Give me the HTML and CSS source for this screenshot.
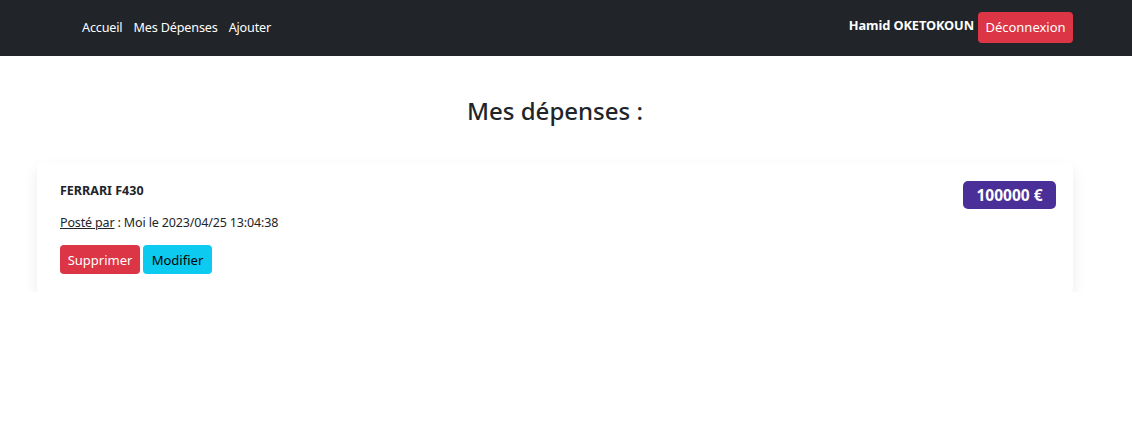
FILE: index.html
```html
<!DOCTYPE html>
<html lang="fr">
<head>
<meta charset="utf-8">
<title>Mes dépenses</title>
<link rel="stylesheet" href="styles.css">
</head>
<body>
<nav class="navbar">
  <ul class="nav-links">
    <li><a href="#">Accueil</a></li>
    <li><a href="#">Mes Dépenses</a></li>
    <li><a href="#">Ajouter</a></li>
  </ul>
  <div class="nav-user">
    <span class="user-name">Hamid OKETOKOUN</span>
    <a class="btn btn-danger btn-logout" href="#">Déconnexion</a>
  </div>
</nav>
<main class="main">
  <h2 class="page-title">Mes dépenses :</h2>
  <div class="card">
    <div class="card-body">
      <h5 class="card-title">FERRARI F430</h5>
      <p class="card-meta"><u>Posté par</u> : Moi le 2023/04/25 13:04:38</p>
      <div class="actions">
        <a class="btn btn-danger" href="#">Supprimer</a>
        <a class="btn btn-info" href="#">Modifier</a>
      </div>
    </div>
    <span class="badge">100000 €</span>
  </div>
</main>
</body>
</html>
```
FILE: styles.css
```css
* { box-sizing: border-box; }
body {
  margin: 0;
  font-family: "Noto Sans", "Open Sans", sans-serif;
  font-size: 13px;
  color: #212529;
  background: #fff;
}
a { text-decoration: none; }
.navbar {
  height: 56px;
  background: #212529;
  display: flex;
  align-items: center;
  justify-content: space-between;
  padding: 0 59px 2px 82px;
}
.nav-links {
  list-style: none;
  margin: 0;
  padding: 0;
  display: flex;
  gap: 11px;
}
.nav-links a {
  color: #fff;
  font-size: 12.6px;
  letter-spacing: -0.15px;
}
.nav-user {
  display: flex;
  align-items: center;
  gap: 4px;
}
.user-name {
  color: #fff;
  font-weight: 700;
  font-size: 12.8px;
  letter-spacing: -0.1px;
  position: relative;
  top: -2px;
}
.btn {
  display: inline-flex;
  align-items: center;
  justify-content: center;
  border-radius: 4px;
  font-size: 13px;
  padding: 0 8px;
  height: 29px;
}
.btn-logout {
  height: 31px;
  width: 95px;
  font-size: 13px;
}
.btn-danger { background: #dc3545; color: #fff; }
.btn-info { background: #0dcaf0; color: #000; }
.main {
  width: 1036px;
  margin-left: 37px;
}
.page-title {
  margin: 38px 0 35px;
  text-align: center;
  font-size: 24px;
  font-weight: 500;
  line-height: 34px;
}
.card {
  display: flex;
  justify-content: space-between;
  align-items: flex-start;
  padding: 18px 17px 18px 23px;
  background: #fff;
  box-shadow: 0 6px 14px rgba(0, 0, 0, 0.08);
  border-radius: 3px;
}
.card-title {
  margin: 0;
  font-size: 12.5px;
  font-weight: 700;
  line-height: 20px;
}
.card-meta {
  margin: 12px 0 12px;
  font-size: 12.5px;
  line-height: 20px;
  letter-spacing: -0.15px;
}
.actions {
  display: flex;
  gap: 3px;
}
.actions .btn-danger { width: 80px; }
.actions .btn-info { width: 69px; }
.badge {
  margin-top: 0;
  width: 93px;
  height: 28px;
  display: inline-flex;
  align-items: center;
  justify-content: center;
  background: #4b2f99;
  color: #fff;
  font-weight: 700;
  font-size: 15.5px;
  border-radius: 5px;
}
```
